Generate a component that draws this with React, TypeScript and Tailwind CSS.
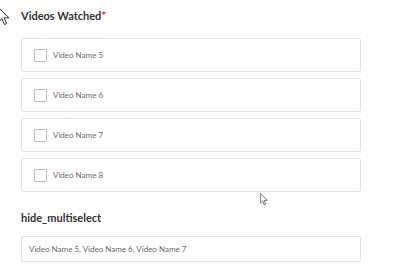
import React from "react";

const videos = ["Video Name 5", "Video Name 6", "Video Name 7", "Video Name 8"];

function Cursor({ className }: { className: string }) {
  return (
    <svg className={className} viewBox="0 0 12 19" fill="white" aria-hidden="true">
      <path
        d="M0.5 0.5 L0.5 15 L4 11.6 L6.4 17.5 L8.6 16.6 L6.2 10.8 L11 10.8 Z"
        stroke="#333"
        strokeWidth="1"
        strokeLinejoin="round"
      />
    </svg>
  );
}

export default function App() {
  return (
    <div className="relative w-[400px] h-[272px] overflow-hidden bg-white font-['Lato',sans-serif]">
      <div className="pl-[21px] pr-[39px] pt-[9px]">
        <h4 className="text-[11px] leading-[14px] font-bold text-[#333]">
          Videos Watched<span className="text-[#d22]">*</span>
        </h4>
        <div className="mt-[15px] flex flex-col gap-[6px]">
          {videos.map((v) => (
            <label
              key={v}
              className="h-[34px] flex items-center gap-[6px] pl-[12px] border border-[#e2e2e2] rounded-[2px]"
            >
              <span className="w-[13px] h-[13px] border border-[#bdbdbd] rounded-[1px] bg-white" />
              <span className="text-[8px] text-[#6b6b6b]">{v}</span>
            </label>
          ))}
        </div>
        <h4 className="mt-[19px] text-[11px] leading-[14px] font-bold text-[#333]">hide_multiselect</h4>
        <div className="mt-[11px] h-[26px] flex items-center pl-[7px] border border-[#e2e2e2] rounded-[2px] text-[8px] text-[#6b6b6b]">
          Video Name 5, Video Name 6, Video Name 7
        </div>
      </div>
      <Cursor className="absolute -left-[2px] top-[7px] w-[12px] h-[19px]" />
      <Cursor className="absolute left-[260px] top-[193px] w-[8px] h-[13px]" />
    </div>
  );
}
